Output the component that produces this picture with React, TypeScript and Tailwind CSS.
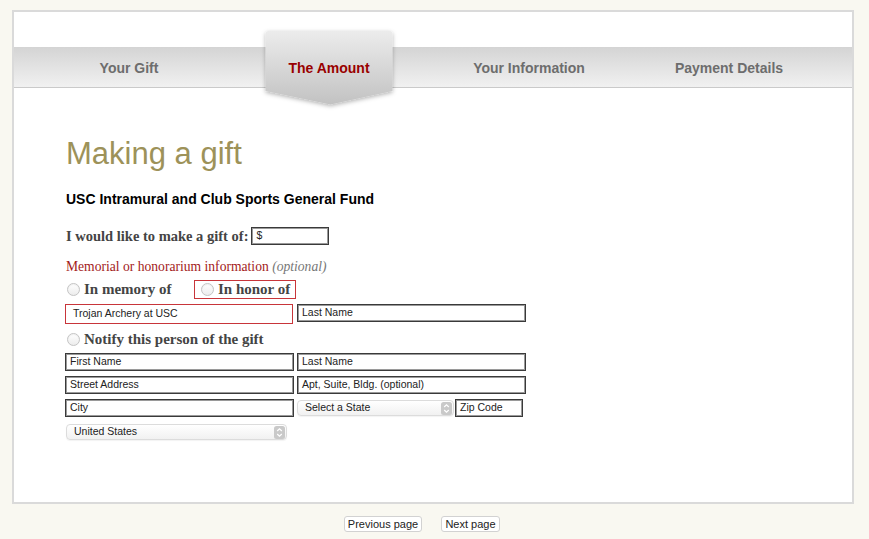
import React from "react";

const SANS = "font-['Liberation_Sans',Arial,sans-serif]";
const SERIF = "font-['Liberation_Serif',Georgia,serif]";

const TABS = ["Your Gift", "The Amount", "Your Information", "Payment Details"];

function ActiveTabShape() {
  return (
    <svg
      className="absolute left-[31px] top-[-21px]"
      width="138"
      height="86"
      viewBox="0 0 138 86"
    >
      <defs>
        <linearGradient id="tabGrad" x1="0" y1="0" x2="0" y2="1">
          <stop offset="0" stopColor="#ececec" />
          <stop offset="1" stopColor="#c2c2c2" />
        </linearGradient>
        <filter id="tabShadow" x="-10%" y="-10%" width="120%" height="130%">
          <feDropShadow dx="0" dy="1.5" stdDeviation="2" floodColor="#000" floodOpacity="0.3" />
        </filter>
      </defs>
      <path
        d="M8.5 5 H129.5 Q132.5 5 132.5 8 V65 L70.5 78.5 L5.5 65 V8 Q5.5 5 8.5 5 Z"
        fill="url(#tabGrad)"
        filter="url(#tabShadow)"
      />
    </svg>
  );
}

function Radio() {
  return (
    <span className="inline-block w-[13px] h-[13px] rounded-full border border-[#c4c4c4] bg-linear-to-b from-white to-[#ececec] shadow-[inset_0_1px_1px_rgba(0,0,0,0.06)]" />
  );
}

function SelectArrows() {
  return (
    <svg width="11" height="13" viewBox="0 0 11 13">
      <rect x="0" y="0" width="11" height="13" rx="2.5" fill="#c9c9c9" />
      <path d="M3.2 5 L5.5 2.8 L7.8 5" stroke="#fff" strokeWidth="1.2" fill="none" />
      <path d="M3.2 8 L5.5 10.2 L7.8 8" stroke="#fff" strokeWidth="1.2" fill="none" />
    </svg>
  );
}

function Field({ label, w, h = 18, red = false, padL = 4 }: { label: string; w: number; h?: number; red?: boolean; padL?: number }) {
  return (
    <div
      className={
        "flex items-center text-[10.5px] text-[#222] bg-white " +
        (red ? "border border-[#c8353a]" : "border border-[#3a3a3a] shadow-[inset_0_0_0_1px_#9a9a9a]")
      }
      style={{ width: w, height: h, paddingLeft: padL }}
    >
      {label}
    </div>
  );
}

function Select({ label, w, h }: { label: string; w: number; h: number }) {
  return (
    <div
      className="flex items-center justify-between rounded-[4px] border border-[#dcdcdc] bg-linear-to-b from-white to-[#f1f1f1] pl-[7px] pr-[1px] text-[10.5px] text-[#222] shadow-[0_1px_1px_rgba(0,0,0,0.05)]"
      style={{ width: w, height: h }}
    >
      <span>{label}</span>
      <SelectArrows />
    </div>
  );
}

export default function App() {
  return (
    <div className={"min-h-[539px] bg-[#f9f8f1] pt-[10px] " + SANS}>
      <div className="ml-[12px] w-[842px] h-[494px] border-2 border-[#dadada] bg-white">
        {/* step tabs */}
        <div className="mt-[35px] h-[41px] flex pl-[15px] bg-linear-to-b from-[#d4d4d4] to-[#f1f1f1] border-b border-[#cacaca]">
          {TABS.map((t, i) => (
            <div key={t} className="relative w-[200px] flex items-center justify-center pt-[2px]">
              {i === 1 && <ActiveTabShape />}
              <span
                className={
                  "relative text-[14px] font-bold leading-[16px] " +
                  (i === 1 ? "text-[#990000]" : "text-[#6d6d6d]")
                }
              >
                {t}
              </span>
            </div>
          ))}
        </div>

        {/* form */}
        <div className="pl-[52px]">
          <h1 className="mt-[47px] h-[38px] leading-[38px] text-[31px] font-normal text-[#9d9259]">
            Making a gift
          </h1>
          <h2 className="mt-[16px] leading-[20px] text-[14px] font-bold text-black">
            USC Intramural and Club Sports General Fund
          </h2>

          <div className="mt-[18px] flex items-center h-[18px]">
            <span className={SERIF + " text-[14.5px] font-bold leading-[18px] text-[#444]"}>
              I would like to make a gift of:
            </span>
            <div className="ml-[3px]">
              <Field label="$" w={78} h={18} />
            </div>
          </div>

          <p className={SERIF + " mt-[13px] leading-[18px] text-[13.6px] text-[#a31b1b]"}>
            Memorial or honorarium information <i className="text-[#777]">(optional)</i>
          </p>

          <div className={SERIF + " mt-[4px] flex items-center h-[19px] text-[15px] font-bold text-[#444]"}>
            <div className="w-[128px] flex items-center gap-[4px] pl-[1px]">
              <Radio />
              <span className="leading-[17px]">In memory of</span>
            </div>
            <div className="h-[19px] flex items-center gap-[4px] border border-[#c8353a] pl-[6px] pr-[5px]">
              <Radio />
              <span className="leading-[17px]">In honor of</span>
            </div>
          </div>

          <div className="mt-[5px] -ml-[1px] flex items-start gap-[4px]">
            <Field label="Trojan Archery at USC" w={228} h={20} red padL={7} />
            <Field label="Last Name" w={229} h={18} />
          </div>

          <div className={SERIF + " mt-[7px] flex items-center gap-[4px] pl-[1px] h-[17px] text-[15px] font-bold text-[#444]"}>
            <Radio />
            <span className="leading-[17px]">Notify this person of the gift</span>
          </div>

          <div className="mt-[5px] -ml-[1px] flex flex-col gap-[5px]">
            <div className="flex gap-[3px]">
              <Field label="First Name" w={229} />
              <Field label="Last Name" w={229} />
            </div>
            <div className="flex gap-[3px]">
              <Field label="Street Address" w={229} />
              <Field label="Apt, Suite, Bldg. (optional)" w={229} />
            </div>
            <div className="flex items-center">
              <Field label="City" w={229} />
              <div className="ml-[3px]">
                <Select label="Select a State" w={157} h={16} />
              </div>
              <div className="ml-[1px]">
                <Field label="Zip Code" w={68} />
              </div>
            </div>
            <div className="mt-[2px] flex pl-[1px]">
              <Select label="United States" w={221} h={16} />
            </div>
          </div>
        </div>
      </div>

      {/* pager */}
      <div className="mt-[12px] ml-[344px] flex gap-[19px]">
        <button className="h-[16px] w-[78px] rounded-[3px] border border-[#d2d2d2] bg-white text-[11px] leading-[14px] text-[#222]">
          Previous page
        </button>
        <button className="h-[16px] w-[59px] rounded-[3px] border border-[#d2d2d2] bg-white text-[11px] leading-[14px] text-[#222]">
          Next page
        </button>
      </div>
    </div>
  );
}
